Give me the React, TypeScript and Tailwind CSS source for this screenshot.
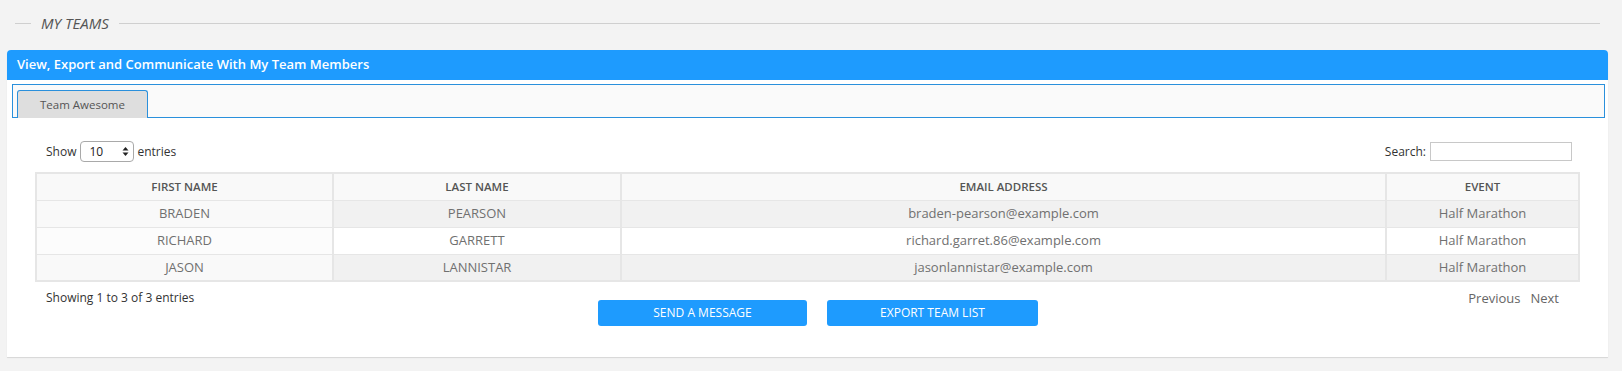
const members = [
  { first: 'BRADEN', last: 'PEARSON', email: 'braden-pearson@example.com', event: 'Half Marathon' },
  { first: 'RICHARD', last: 'GARRETT', email: 'richard.garret.86@example.com', event: 'Half Marathon' },
  { first: 'JASON', last: 'LANNISTAR', email: 'jasonlannistar@example.com', event: 'Half Marathon' },
]

export default function App() {
  return (
    <div className="min-h-screen bg-[#f3f3f3] font-['Open_Sans',sans-serif] text-[#666]">
      {/* Section title */}
      <div className="h-[46px] flex items-center pl-[15px] pr-[22px]">
        <div className="w-[16px] h-px bg-[#cfcfcf]" />
        <span className="ml-[10px] mr-[10px] text-[15px] italic text-[#555]">MY TEAMS</span>
        <div className="flex-1 h-px bg-[#cfcfcf]" />
      </div>

      {/* Panel */}
      <div className="mt-[4px] ml-[7px] mr-[14px] bg-white rounded-t-[4px] shadow-[0_1px_1px_rgba(0,0,0,0.12)]">
        <div className="h-[30px] flex items-center px-[10px] bg-[#1e9bfe] rounded-t-[4px] text-white text-[13px] font-semibold">
          View, Export and Communicate With My Team Members
        </div>

        <div className="pl-[5px] pr-[3px] pt-[4px]">
          <div className="h-[34px] flex items-end border border-[#2a90dc] bg-[#fafafa] pl-[4px]">
            <div className="w-[131px] h-[28px] -mb-px flex items-center justify-center bg-[#dedede] border border-b-0 border-[#2a90dc] rounded-t-[3px] text-[11.5px] text-[#555]">
              Team Awesome
            </div>
          </div>
        </div>

        <div className="px-[28px] pt-[23px] pb-[31px]">
          {/* Controls */}
          <div className="flex items-center justify-between pl-[11px] pr-[8px] text-[12px] text-[#333]">
            <div className="flex items-center">
              <span>Show</span>
              <div className="ml-[4px] mr-[3px] w-[54px] h-[21px] border border-[#a9a9a9] rounded-[4px] flex items-center justify-between pl-[8px] pr-[4px] bg-white">
                <span className="text-[#222]">10</span>
                <svg width="7" height="11" viewBox="0 0 7 11">
                  <path d="M3.5 1 L6.5 4.5 L0.5 4.5 Z" fill="#222" />
                  <path d="M3.5 10 L6.5 6.5 L0.5 6.5 Z" fill="#222" />
                </svg>
              </div>
              <span>entries</span>
            </div>
            <div className="flex items-center">
              <span>Search:</span>
              <div className="ml-[4px] w-[142px] h-[19px] border border-[#c8c8c8] bg-white" />
            </div>
          </div>

          {/* Table */}
          <table className="mt-[10px] w-full border-collapse border-2 border-[#e6e6e6] text-center">
            <thead>
              <tr className="h-[27px] bg-[#f9f9f9] text-[11.5px] font-semibold text-[#555]">
                <th className="w-[297px] border-r-2 border-[#e6e6e6] font-semibold">FIRST NAME</th>
                <th className="w-[288px] border-r-2 border-[#e6e6e6] font-semibold">LAST NAME</th>
                <th className="w-[765px] border-r-2 border-[#e6e6e6] font-semibold">EMAIL ADDRESS</th>
                <th className="font-semibold">EVENT</th>
              </tr>
            </thead>
            <tbody className="text-[13px] text-[#707070]">
              {members.map((m, i) => (
                <tr key={m.email} className={`h-[27px] border-t border-[#e6e6e6] ${i % 2 === 0 ? 'bg-[#f1f1f1]' : 'bg-white'}`}>
                  <td className={`border-r-2 border-[#e6e6e6] ${i % 2 === 0 ? 'bg-[#f9f9f9]' : 'bg-[#fcfcfc]'}`}>{m.first}</td>
                  <td className="border-r-2 border-[#e6e6e6]">{m.last}</td>
                  <td className="border-r-2 border-[#e6e6e6]">{m.email}</td>
                  <td>{m.event}</td>
                </tr>
              ))}
            </tbody>
          </table>

          {/* Footer */}
          <div className="flex items-start pt-[7px] pl-[11px] pr-[21px]">
            <div className="w-[552px] text-[12px] leading-[17px] text-[#333]">Showing 1 to 3 of 3 entries</div>
            <div className="mt-[11px] flex gap-[20px]">
              <button className="w-[209px] h-[26px] bg-[#1e9bfe] rounded-[3px] text-white text-[12px] uppercase">Send a Message</button>
              <button className="w-[211px] h-[26px] bg-[#1e9bfe] rounded-[3px] text-white text-[12px] uppercase">Export Team List</button>
            </div>
            <div className="ml-auto flex gap-[10px] text-[13px] leading-[18px] text-[#666]">
              <span>Previous</span>
              <span>Next</span>
            </div>
          </div>
        </div>
      </div>
    </div>
  )
}
